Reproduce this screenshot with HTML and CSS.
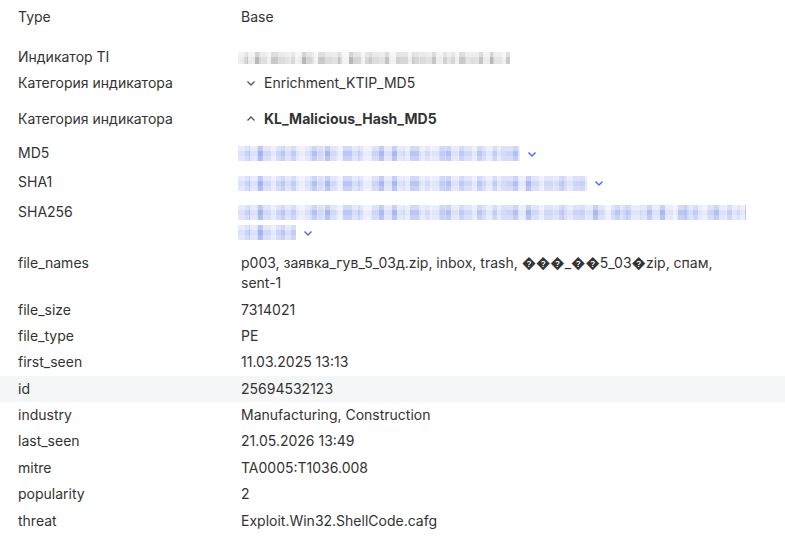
FILE: index.html
```html
<!DOCTYPE html>
<html lang="ru">
<head>
    <meta charset="UTF-8">
    <meta name="viewport" content="width=device-width, initial-scale=1.0">
    <title>Indicator details</title>
    <link rel="stylesheet" href="styles.css">
</head>
<body>
    <div class="details">
        <div class="row">
            <div class="label">Type</div>
            <div class="value">Base</div>
        </div>

        <!-- Indicator block -->
        <div class="row section">
            <div class="label">Индикатор TI</div>
            <div class="value"><span class="mosaic grey w-ti"></span></div>
        </div>
        <div class="row">
            <div class="label">Категория индикатора</div>
            <div class="value">
                <span class="toggle">
                    <svg class="chev" viewBox="0 0 10 10"><path d="M1.5 3.5 L5 7 L8.5 3.5"/></svg>
                    Enrichment_KTIP_MD5
                </span>
            </div>
        </div>

        <!-- Expanded category -->
        <div class="row section-small">
            <div class="label">Категория индикатора</div>
            <div class="value">
                <span class="toggle open">
                    <svg class="chev" viewBox="0 0 10 10"><path d="M1.5 6.5 L5 3 L8.5 6.5"/></svg>
                    KL_Malicious_Hash_MD5
                </span>
            </div>
        </div>

        <div class="hashes">
            <div class="row hash">
                <div class="label">MD5</div>
                <div class="value"><span class="mosaic w-md5"></span><svg class="chev blue" viewBox="0 0 10 10"><path d="M1.5 3.5 L5 7 L8.5 3.5"/></svg></div>
            </div>
            <div class="row hash">
                <div class="label">SHA1</div>
                <div class="value"><span class="mosaic w-sha1"></span><svg class="chev blue" viewBox="0 0 10 10"><path d="M1.5 3.5 L5 7 L8.5 3.5"/></svg></div>
            </div>
            <div class="row hash">
                <div class="label">SHA256</div>
                <div class="value">
                    <span class="mosaic w-sha256"></span><br>
                    <span class="mosaic w-sha256-tail"></span><svg class="chev blue" viewBox="0 0 10 10"><path d="M1.5 3.5 L5 7 L8.5 3.5"/></svg>
                </div>
            </div>
        </div>

        <div class="row gap">
            <div class="label">file_names</div>
            <div class="value">p003, заявка_гув_5_03д.zip, inbox, trash, ���_��5_03�zip, спам, sent-1</div>
        </div>
        <div class="row">
            <div class="label">file_size</div>
            <div class="value">7314021</div>
        </div>
        <div class="row">
            <div class="label">file_type</div>
            <div class="value">PE</div>
        </div>
        <div class="row">
            <div class="label">first_seen</div>
            <div class="value">11.03.2025 13:13</div>
        </div>
        <div class="row hover">
            <div class="label">id</div>
            <div class="value">25694532123</div>
        </div>
        <div class="row">
            <div class="label">industry</div>
            <div class="value">Manufacturing, Construction</div>
        </div>
        <div class="row">
            <div class="label">last_seen</div>
            <div class="value">21.05.2026 13:49</div>
        </div>
        <div class="row">
            <div class="label">mitre</div>
            <div class="value">TA0005:T1036.008</div>
        </div>
        <div class="row">
            <div class="label">popularity</div>
            <div class="value">2</div>
        </div>
        <div class="row">
            <div class="label">threat</div>
            <div class="value">Exploit.Win32.ShellCode.cafg</div>
        </div>
    </div>
</body>
</html>
```

FILE: styles.css
```css
body {
    margin: 0;
    background-color: #fff;
    font-family: Inter, Roboto, 'Noto Sans', sans-serif;
    font-size: 14px;
    color: #333;
}

.details {
    padding-top: 4px;
}

.row {
    display: grid;
    grid-template-columns: 223px 1fr;
    padding: 3.2px 44px 3.2px 18px;
    line-height: 20px;
}

.row.hover {
    background-color: #f5f6f7;
}

.section {
    margin-top: 13.4px;
}

.section-small {
    margin-top: 9.2px;
}

.hashes {
    margin-top: 6px;
}

.row.hash {
    padding-top: 4.7px;
    padding-bottom: 4.7px;
}

.gap {
    margin-top: 3.8px;
}

.toggle {
    display: inline-flex;
    align-items: center;
    gap: 8px;
    margin-left: 5px;
}

.toggle.open {
    font-weight: 700;
}

.chev {
    width: 10px;
    height: 10px;
    fill: none;
    stroke: #555;
    stroke-width: 1.3;
    flex-shrink: 0;
}

.chev.blue {
    stroke: #4f6ef0;
    stroke-width: 1.5;
    margin-left: 7px;
    vertical-align: -1px;
}

/* redacted values - pixelated look */
.mosaic {
    display: inline-block;
    height: 15px;
    vertical-align: middle;
    margin-left: -3px;
    background:
        repeating-linear-gradient(90deg, rgba(255,255,255,0.3) 0 11px, transparent 11px 19px, rgba(120,140,230,0.12) 19px 24px, transparent 24px 37px, rgba(255,255,255,0.25) 37px 43px, transparent 43px 61px),
        linear-gradient(180deg, rgba(255,255,255,0.35) 0 33%, transparent 33% 66%, rgba(255,255,255,0.2) 66%),
        repeating-linear-gradient(90deg, #cdd4f8 0 7px, #b4c0f3 7px 12px, #dde2fa 12px 20px, #aab7f1 20px 25px, #d2d9f8 25px 33px, #e5e9fc 33px 38px, #bcc6f4 38px 47px, #d8def9 47px 53px, #c2ccf5 53px 58px, #e0e5fb 58px 67px);
}

.mosaic.grey {
    height: 12px;
    background:
        repeating-linear-gradient(90deg, rgba(255,255,255,0.35) 0 9px, transparent 9px 23px, rgba(255,255,255,0.25) 23px 29px, transparent 29px 51px),
        linear-gradient(180deg, rgba(255,255,255,0.4) 0 40%, transparent 40%),
        repeating-linear-gradient(90deg, #e2e2e2 0 6px, #c4c4c4 6px 10px, #ececec 10px 17px, #b8b8b8 17px 21px, #d6d6d6 21px 29px, #f0f0f0 29px 33px, #c9c9c9 33px 40px, #dcdcdc 40px 47px);
}

.w-ti { width: 272px; }
.w-md5 { width: 282px; }
.w-sha1 { width: 349px; }
.w-sha256 { width: 508px; }
.w-sha256-tail { width: 58px; }
```
